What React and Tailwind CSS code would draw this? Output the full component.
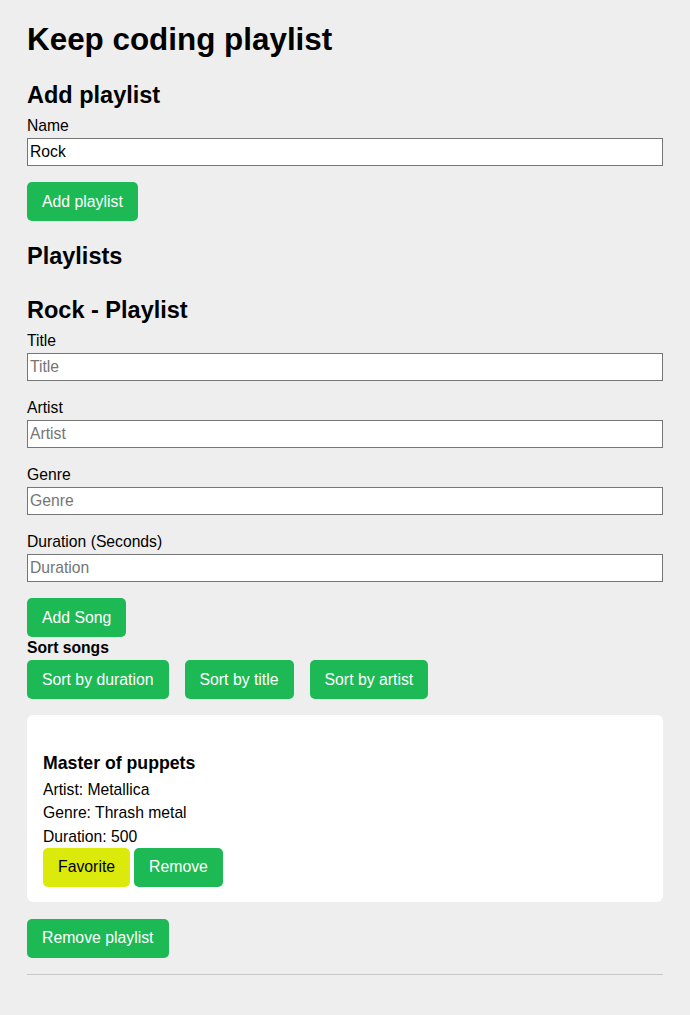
import React, { useState } from 'react';

const font = { fontFamily: '"Liberation Sans", Arial, sans-serif' };

const GreenButton = ({ children, className = '' }) => (
  <button
    className={`h-[39px] px-[15px] rounded-[5px] bg-[#1db954] text-white text-[15.8px] leading-[18px] ${className}`}
  >
    {children}
  </button>
);

const Field = ({ label, placeholder, value, className = '' }) => (
  <div className={`flex flex-col ${className}`}>
    <label className="text-[15.7px] leading-[18px] text-black">{label}</label>
    <input
      defaultValue={value}
      placeholder={placeholder}
      className="mt-[3px] h-[28px] w-full border border-[#767676] bg-white px-[2px] text-[15.7px] leading-[18px] text-black placeholder:text-[#757575] outline-none"
    />
  </div>
);

const songs = [
  { title: 'Master of puppets', artist: 'Metallica', genre: 'Thrash metal', duration: 500 },
];

export default function App() {
  const [name] = useState('Rock');

  return (
    <div className="min-h-[1015px] bg-[#eeeeee] px-[27px] pt-[21px] text-black" style={font}>
      <h1 className="text-[31.4px] leading-[37px] font-bold">Keep coding playlist</h1>

      <h2 className="mt-[23px] text-[23.5px] leading-[28px] font-bold">Add playlist</h2>
      <Field label="Name" value={name} className="mt-[8px]" />
      <GreenButton className="mt-[16px]">Add playlist</GreenButton>

      <h2 className="mt-[21px] text-[23.5px] leading-[28px] font-bold">Playlists</h2>

      <section className="mt-[26px]">
        <h2 className="text-[23.5px] leading-[28px] font-bold">{name} - Playlist</h2>
        <Field label="Title" placeholder="Title" className="mt-[8px]" />
        <Field label="Artist" placeholder="Artist" className="mt-[18px]" />
        <Field label="Genre" placeholder="Genre" className="mt-[18px]" />
        <Field label="Duration (Seconds)" placeholder="Duration" className="mt-[18px]" />
        <GreenButton className="mt-[16px]">Add Song</GreenButton>

        <div className="mt-[2px] text-[15.7px] leading-[18px] font-bold">Sort songs</div>
        <div className="mt-[3px] flex gap-[16px]">
          <GreenButton>Sort by duration</GreenButton>
          <GreenButton>Sort by title</GreenButton>
          <GreenButton>Sort by artist</GreenButton>
        </div>

        {songs.map((song) => (
          <div key={song.title} className="mt-[16px] rounded-[6px] bg-white px-[16px] pt-[38px] pb-[15px]">
            <h3 className="text-[17.7px] leading-[21px] font-bold">{song.title}</h3>
            <div className="mt-[4px] text-[15.7px] leading-[23.3px]">
              <p>Artist: {song.artist}</p>
              <p>Genre: {song.genre}</p>
              <p>Duration: {song.duration}</p>
            </div>
            <div className="flex gap-[4px]">
              <button className="h-[39px] px-[15px] rounded-[5px] bg-[#dbea0b] text-black text-[15.8px] leading-[18px]">
                Favorite
              </button>
              <GreenButton>Remove</GreenButton>
            </div>
          </div>
        ))}

        <GreenButton className="mt-[17px]">Remove playlist</GreenButton>
        <hr className="mt-[16px] border-t border-[#c8c8c8]" />
      </section>
    </div>
  );
}
